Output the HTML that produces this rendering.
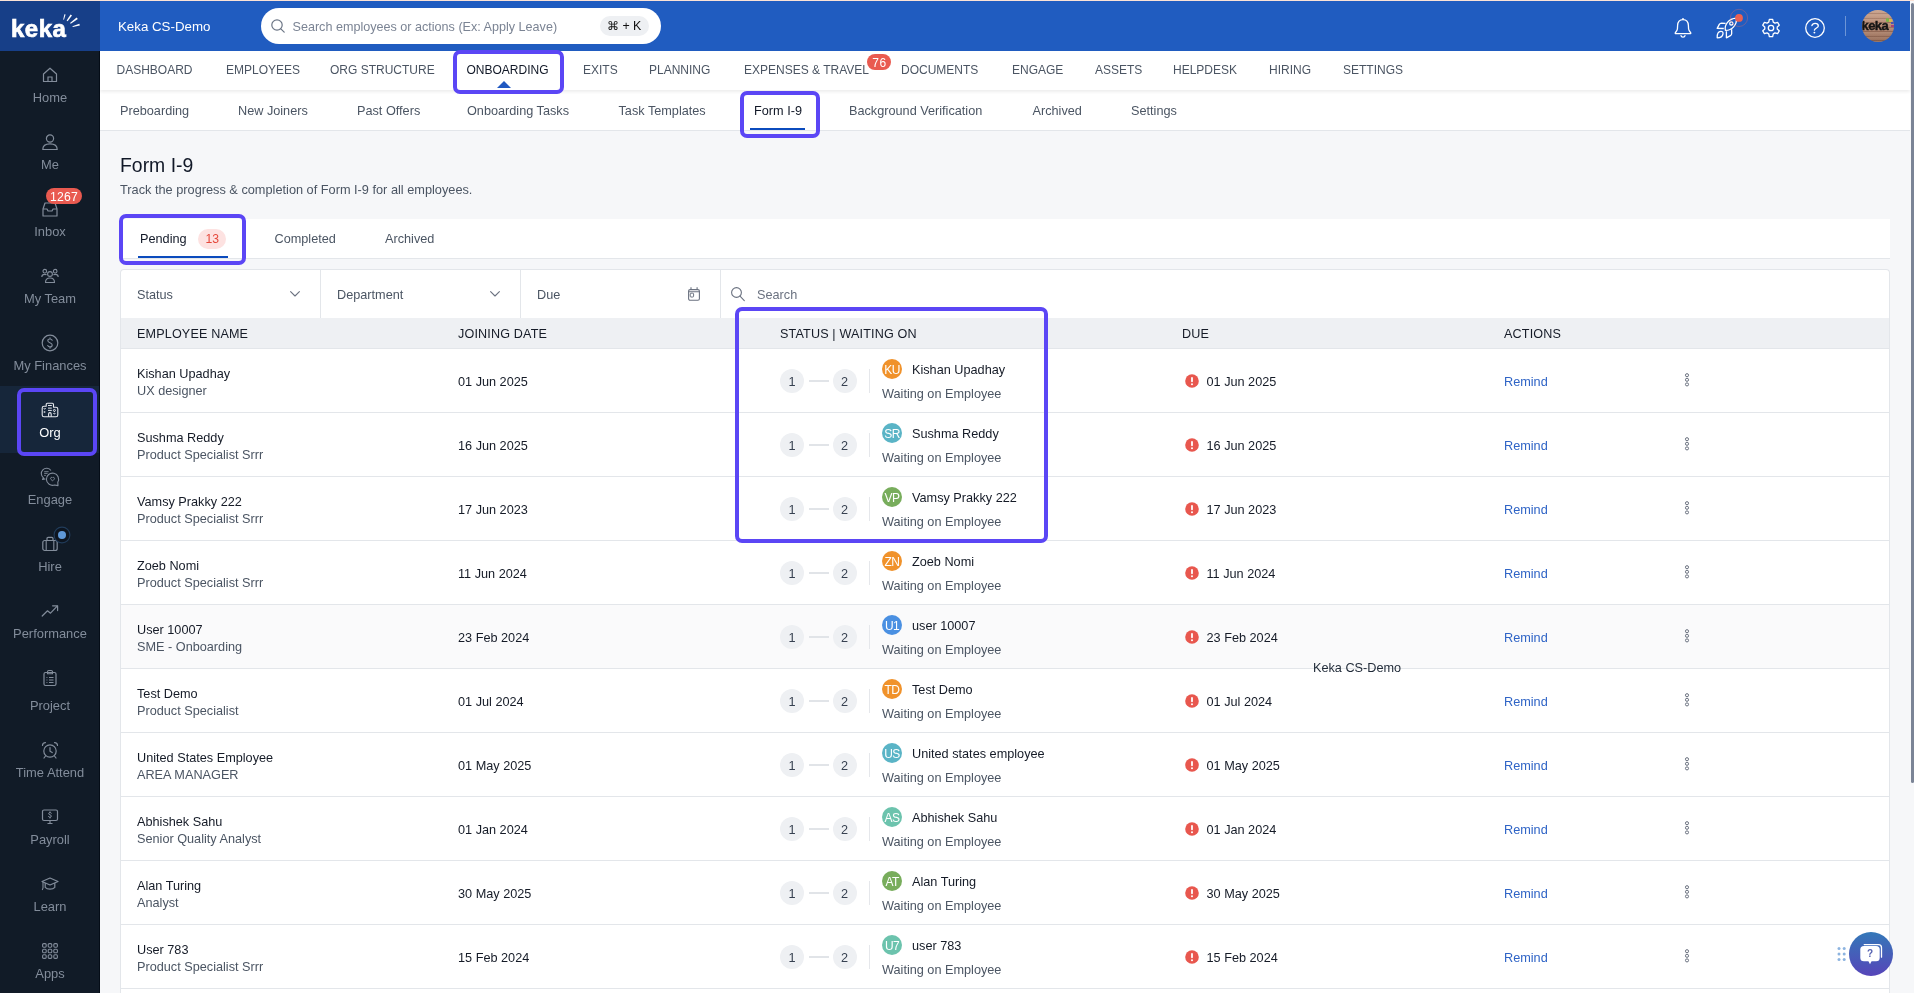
<!DOCTYPE html><html><head><meta charset="utf-8"><title>Form I-9</title><style>
*{box-sizing:border-box;margin:0;padding:0}
html,body{width:1914px;height:993px;overflow:hidden;background:#f6f7f9;font-family:"Liberation Sans",sans-serif}
.t{position:absolute;line-height:1;white-space:nowrap}
.a{position:absolute}
svg.a{overflow:visible}
</style></head><body><div style="position:absolute;left:0;top:0;width:1914px;height:993px;overflow:hidden;will-change:transform">
<div class="a" style="left:0px;top:0px;width:1914px;height:1px;background:#fbe2d6"></div>
<div class="a" style="left:0px;top:1px;width:1910px;height:50px;background:#205cc0"></div>
<div class="a" style="left:0px;top:1px;width:100px;height:50px;background:#173f88"></div>
<div class="t" style="left:11px;top:16.7px;font-size:24px;font-weight:700;color:#fff;letter-spacing:0.5px;-webkit-text-stroke:0.7px #fff">keka</div>
<svg class="a" style="left:5px;top:8px;" width="84" height="37" viewBox="5 8 84 37" fill="none"><g fill="#fff"><path d="M63.2 19.6 L64.4 14.3 L65.6 14.6 L64.0 19.8 Z"/><path d="M66.6 20.6 L70.6 14.6 L72.0 15.4 L67.6 21.2 Z"/><path d="M70.0 23.0 L76.6 17.6 L77.8 19.0 L70.8 23.8 Z"/><path d="M72.4 26.2 L79.4 23.8 L79.8 25.4 L72.8 27.0 Z"/></g></svg>
<div class="t" style="left:118px;top:20.04px;font-size:13.3px;color:#fff;">Keka CS-Demo</div>
<div class="a" style="left:261px;top:8px;width:400px;height:36px;background:#fff;border-radius:18px"></div>
<svg class="a" style="left:271px;top:19px;" width="14" height="14" viewBox="0 0 14 14" fill="none"><circle cx="6" cy="6" r="5.2" stroke="#6b7585" stroke-width="1.2"/><line x1="9.8" y1="9.8" x2="13.2" y2="13.2" stroke="#6b7585" stroke-width="1.2" stroke-linecap="round"/></svg>
<div class="t" style="left:292.5px;top:21.33px;font-size:12.6px;color:#7b8494;">Search employees or actions (Ex: Apply Leave)</div>
<div class="a" style="left:600px;top:16px;width:49px;height:20px;background:#eef0f3;border-radius:10px"></div>
<div class="t" style="left:607px;top:19.50px;font-size:12.4px;color:#111;">&#8984; + K</div>
<svg class="a" style="left:1668px;top:12px;" width="32" height="32" viewBox="0 0 32 32" fill="none"><circle cx="15" cy="6.9" r="0.9" fill="#fff"/><path d="M15 7.6 C11.4 7.6 9.7 10.4 9.6 13.6 L9.4 17 C9.2 18.6 8.4 19.4 7.5 20.4 C6.8 21.3 7.2 21.7 8.2 21.7 H21.8 C22.8 21.7 23.2 21.3 22.5 20.4 C21.6 19.4 20.8 18.6 20.6 17 L20.4 13.6 C20.3 10.4 18.6 7.6 15 7.6 Z" stroke="#fff" stroke-width="1.3" stroke-linejoin="round"/><path d="M13 23.6 C13.3 25.6 16.7 25.6 17 23.6" stroke="#fff" stroke-width="1.3" stroke-linecap="round"/></svg>
<svg class="a" style="left:1712px;top:8px;" width="40" height="34" viewBox="0 0 40 34" fill="none"><g stroke="#fff" stroke-width="1.3" stroke-linejoin="round" fill="none"><path d="M13.4 22.4 C12.2 17.5 16 10.6 24.4 10.2 C25.2 16.8 19.8 22.6 13.4 22.4 Z"/><circle cx="19.3" cy="15.4" r="1.6"/><path d="M13.6 15.3 L9.5 15.1 C8.5 15.1 7.8 15.6 7.3 16.4 L5.2 20.4 L11.8 20.5"/><path d="M19.6 21.2 L19.7 25.5 C19.7 26.5 19.2 27.2 18.4 27.7 L14.4 29.8 L14.4 23.3"/><path d="M5.2 29.8 C5 26 6.5 23.5 8.8 23.3 C10.3 23.2 11.2 24.3 11 25.8 C10.6 28.3 8 29.8 5.2 29.8 Z"/></g><circle cx="27" cy="9.9" r="8.6" stroke="rgba(235,110,100,0.35)" stroke-width="1" fill="none"/><circle cx="27" cy="9.9" r="3.9" fill="#ec6152"/></svg>
<svg class="a" style="left:1755px;top:12px;" width="32" height="32" viewBox="0 0 32 32" fill="none"><path d="M13.74 10.12 L14.34 7.46 L17.66 7.46 L18.26 10.12 L19.96 11.10 L22.57 10.29 L24.23 13.17 L22.22 15.01 L22.22 16.99 L24.23 18.83 L22.57 21.71 L19.96 20.90 L18.26 21.88 L17.66 24.54 L14.34 24.54 L13.74 21.88 L12.04 20.90 L9.43 21.71 L7.77 18.83 L9.78 16.99 L9.78 15.01 L7.77 13.17 L9.43 10.29 L12.04 11.10 Z" stroke="#fff" stroke-width="1.3" stroke-linejoin="round"/><circle cx="16" cy="16" r="2.7" stroke="#fff" stroke-width="1.3"/></svg>
<svg class="a" style="left:1805px;top:18px;" width="20" height="20" viewBox="0 0 20 20" fill="none"><circle cx="10" cy="10" r="9.3" stroke="#fff" stroke-width="1.3"/><path d="M6.9 7.7 C7.3 6.2 8.5 5.4 10.1 5.4 C11.9 5.4 13.3 6.5 13.3 8 C13.3 9.8 9.7 10.2 9.4 12.2" stroke="#fff" stroke-width="1.3" stroke-linecap="round" fill="none"/><circle cx="9.4" cy="14.6" r="0.95" fill="#fff"/></svg>
<div class="a" style="left:1845px;top:16px;width:1px;height:20px;background:rgba(255,255,255,0.35)"></div>
<div class="a" style="left:1862px;top:10px;width:32px;height:32px;border-radius:50%;background:repeating-linear-gradient(180deg,#bf9680 0px,#b88d77 3px,#8f6552 3.7px,#bb917b 4.5px);overflow:hidden"><div class="a" style="left:0;top:0;width:32px;height:32px;background:linear-gradient(180deg,rgba(255,230,210,0.25) 0%,rgba(0,0,0,0) 45%,rgba(70,35,20,0.28) 100%)"></div><div class="t" style="left:-0.5px;top:9.2px;font-size:13px;font-weight:700;color:#151515;letter-spacing:-0.6px;-webkit-text-stroke:0.4px #151515">keka</div><div class="a" style="left:24px;top:8px;width:2.5px;height:3.5px;background:#7fb34a;border-radius:1px"></div><div class="a" style="left:27px;top:9px;width:2.5px;height:3px;background:#d8b84a;border-radius:1px"></div><div class="a" style="left:28.5px;top:11.5px;width:3.5px;height:2px;background:#4a58b0"></div><div class="a" style="left:28.5px;top:14.5px;width:3.5px;height:2px;background:#a8407a"></div></div>
<div class="a" style="left:0px;top:51px;width:100px;height:942px;background:#111b27"></div>
<div class="a" style="left:0px;top:386px;width:100px;height:67px;background:#16263a"></div>
<svg class="a" style="left:41.0px;top:66.0px;" width="18" height="18" viewBox="0 0 18 18" fill="none"><path d="M2.5 8 L9 2.2 L15.5 8 V15.5 H2.5 Z" stroke="#838d9b" stroke-width="1.2" stroke-linejoin="round"/><path d="M7 15.5 V11 H11 V15.5" stroke="#838d9b" stroke-width="1.2"/></svg>
<div class="t" style="left:0;width:100px;text-align:center;top:92.08px;font-size:12.9px;color:#838d9b">Home</div>
<svg class="a" style="left:41.0px;top:133.0px;" width="18" height="18" viewBox="0 0 18 18" fill="none"><circle cx="9" cy="5.5" r="3.6" stroke="#838d9b" stroke-width="1.2"/><path d="M1.8 16.5 C1.8 12.2 5 10.8 9 10.8 C13 10.8 16.2 12.2 16.2 16.5 Z" stroke="#838d9b" stroke-width="1.2" stroke-linejoin="round"/></svg>
<div class="t" style="left:0;width:100px;text-align:center;top:159.08px;font-size:12.9px;color:#838d9b">Me</div>
<svg class="a" style="left:41.0px;top:200.0px;" width="18" height="18" viewBox="0 0 18 18" fill="none"><path d="M2 9 L4 3 H14 L16 9 V16 H2 Z" stroke="#838d9b" stroke-width="1.2" stroke-linejoin="round"/><path d="M2 9 H6 L7 11 H11 L12 9 H16" stroke="#838d9b" stroke-width="1.2" stroke-linejoin="round"/></svg>
<div class="t" style="left:0;width:100px;text-align:center;top:226.08px;font-size:12.9px;color:#838d9b">Inbox</div>
<svg class="a" style="left:41.0px;top:267.0px;" width="18" height="18" viewBox="0 0 18 18" fill="none"><circle cx="9" cy="7" r="2.4" stroke="#838d9b" stroke-width="1.1"/><path d="M4.5 15.5 C4.5 12 6.5 11 9 11 C11.5 11 13.5 12 13.5 15.5 Z" stroke="#838d9b" stroke-width="1.1" stroke-linejoin="round"/><circle cx="3.8" cy="4.2" r="1.8" stroke="#838d9b" stroke-width="1.1"/><circle cx="14.2" cy="4.2" r="1.8" stroke="#838d9b" stroke-width="1.1"/><path d="M0.8 10 C0.8 8 2 7.4 3.8 7.4 C4.6 7.4 5.2 7.6 5.6 7.9" stroke="#838d9b" stroke-width="1.1"/><path d="M17.2 10 C17.2 8 16 7.4 14.2 7.4 C13.4 7.4 12.8 7.6 12.4 7.9" stroke="#838d9b" stroke-width="1.1"/></svg>
<div class="t" style="left:0;width:100px;text-align:center;top:293.08px;font-size:12.9px;color:#838d9b">My Team</div>
<svg class="a" style="left:41.0px;top:334.0px;" width="18" height="18" viewBox="0 0 18 18" fill="none"><circle cx="9" cy="9" r="7.8" stroke="#838d9b" stroke-width="1.2"/><path d="M11.2 6.2 C10.8 5.4 10 5 9 5 C7.6 5 6.8 5.8 6.8 6.8 C6.8 9 11.2 8.4 11.2 10.9 C11.2 12 10.3 12.9 9 12.9 C7.9 12.9 7.1 12.4 6.7 11.6 M9 3.8 V5 M9 12.9 V14.2" stroke="#838d9b" stroke-width="1.1" stroke-linecap="round"/></svg>
<div class="t" style="left:0;width:100px;text-align:center;top:360.08px;font-size:12.9px;color:#838d9b">My Finances</div>
<svg class="a" style="left:41.0px;top:401.0px;" width="18" height="18" viewBox="0 0 18 18" fill="none"><path d="M5.2 5.3 V3.4 C5.2 2.7 5.7 2.2 6.4 2.2 H11.3 C12 2.2 12.5 2.7 12.5 3.4 V6.2 H15 C16 6.2 16.8 7 16.8 8 V14 C16.8 15 16 15.8 15 15.8 H3 C2 15.8 1.2 15 1.2 14 V7.1 C1.2 6.1 2 5.3 3 5.3 Z" stroke="#e6e9ee" stroke-width="1.1" stroke-linejoin="round"/><path d="M7.6 15.8 V13 C7.6 12.2 8.2 11.6 8.9 11.6 C9.6 11.6 10.2 12.2 10.2 13 V15.8" stroke="#e6e9ee" stroke-width="1.1"/><path d="M7 4.5 H10.8 M7 7.1 H10.8 M7 9.4 H10.8" stroke="#e6e9ee" stroke-width="1"/><path d="M2.8 7.2 C3 8.4 4.4 8.4 4.6 7.2" stroke="#e6e9ee" stroke-width="1"/><rect x="2.7" y="10.3" width="1.6" height="1.4" fill="#e6e9ee"/><circle cx="13.4" cy="9.4" r="1" stroke="#e6e9ee" stroke-width="0.9"/><path d="M13.4 10.4 V11.2 M12.4 12 C12.6 13.2 14.2 13.2 14.4 12" stroke="#e6e9ee" stroke-width="1"/></svg>
<div class="t" style="left:0;width:100px;text-align:center;top:427.08px;font-size:12.9px;color:#fff">Org</div>
<svg class="a" style="left:41.0px;top:468.0px;" width="18" height="18" viewBox="0 0 18 18" fill="none"><path d="M9.94 2.56 A5.3 5.3 0 1 0 2.56 9.94 L1.5 11.4 L4.3 10.9" stroke="#838d9b" stroke-width="1.1" stroke-linejoin="round"/><path d="M3.2 3.7 H7.6 M3.2 5.4 H6.6 M3.2 7.4 H4.8" stroke="#838d9b" stroke-width="0.9"/><path d="M13.59 16.93 A6.1 6.1 0 1 1 16.78 14.25 L17 17.6 Z" stroke="#838d9b" stroke-width="1.1" stroke-linejoin="round"/><path d="M11.5 12.9 L9.9 11.3 C9.3 10.7 9.5 9.6 10.3 9.4 C10.9 9.3 11.3 9.6 11.5 10 C11.7 9.6 12.1 9.3 12.7 9.4 C13.5 9.6 13.7 10.7 13.1 11.3 Z" stroke="#838d9b" stroke-width="0.9" stroke-linejoin="round"/></svg>
<div class="t" style="left:0;width:100px;text-align:center;top:494.08px;font-size:12.9px;color:#838d9b">Engage</div>
<svg class="a" style="left:41.0px;top:535.0px;" width="18" height="18" viewBox="0 0 18 18" fill="none"><rect x="1.8" y="5.5" width="14.4" height="10" rx="2" stroke="#838d9b" stroke-width="1.2"/><path d="M6 5.5 V3.6 C6 2.9 6.5 2.4 7.2 2.4 H10.8 C11.5 2.4 12 2.9 12 3.6 V5.5" stroke="#838d9b" stroke-width="1.2"/><path d="M5.2 5.5 V15.5 M12.8 5.5 V15.5" stroke="#838d9b" stroke-width="1.1"/></svg>
<div class="t" style="left:0;width:100px;text-align:center;top:561.08px;font-size:12.9px;color:#838d9b">Hire</div>
<svg class="a" style="left:41.0px;top:602.0px;" width="18" height="18" viewBox="0 0 18 18" fill="none"><path d="M1.2 14 L6.5 8.8 L9.5 11.2 L16.2 4.2" stroke="#838d9b" stroke-width="1.2" stroke-linecap="round" stroke-linejoin="round"/><path d="M11.6 3.8 H16.6 V8.6" stroke="#838d9b" stroke-width="1.2" stroke-linecap="round" stroke-linejoin="round"/></svg>
<div class="t" style="left:0;width:100px;text-align:center;top:628.08px;font-size:12.9px;color:#838d9b">Performance</div>
<svg class="a" style="left:41.0px;top:669.0px;" width="18" height="18" viewBox="0 0 18 18" fill="none"><rect x="3" y="3.5" width="12" height="13" rx="1.5" stroke="#838d9b" stroke-width="1.2"/><path d="M6.5 3.5 V2.8 C6.5 2 7 1.5 7.8 1.5 H10.2 C11 1.5 11.5 2 11.5 2.8 V4.8 H6.5 Z" stroke="#838d9b" stroke-width="1.1"/><path d="M5.5 8.5 H6.4 M8 8.5 H12.5 M5.5 11 H6.4 M8 11 H12.5 M5.5 13.5 H6.4 M8 13.5 H12.5" stroke="#838d9b" stroke-width="1.1"/></svg>
<div class="t" style="left:0;width:100px;text-align:center;top:700.08px;font-size:12.9px;color:#838d9b">Project</div>
<svg class="a" style="left:41.0px;top:741.0px;" width="18" height="18" viewBox="0 0 18 18" fill="none"><circle cx="9" cy="10" r="6.2" stroke="#838d9b" stroke-width="1.2"/><path d="M9 6.5 V10.2 L11.2 11.6" stroke="#838d9b" stroke-width="1.2" stroke-linecap="round"/><path d="M1.5 4.5 C1.5 2.8 2.8 1.6 4.5 1.6 M16.5 4.5 C16.5 2.8 15.2 1.6 13.5 1.6 M4.5 15 L3 17 M13.5 15 L15 17" stroke="#838d9b" stroke-width="1.2" stroke-linecap="round"/></svg>
<div class="t" style="left:0;width:100px;text-align:center;top:767.08px;font-size:12.9px;color:#838d9b">Time Attend</div>
<svg class="a" style="left:41.0px;top:808.0px;" width="18" height="18" viewBox="0 0 18 18" fill="none"><rect x="1.5" y="2" width="15" height="10.5" rx="1.5" stroke="#838d9b" stroke-width="1.2"/><path d="M6.5 15.5 H11.5 M9 12.5 V15.5" stroke="#838d9b" stroke-width="1.2"/><path d="M10.4 5.2 C10.1 4.8 9.6 4.6 9 4.6 C8.2 4.6 7.6 5 7.6 5.7 C7.6 7 10.4 6.6 10.4 8.1 C10.4 8.8 9.8 9.3 9 9.3 C8.3 9.3 7.8 9 7.5 8.5 M9 3.8 V4.6 M9 9.3 V10.1" stroke="#838d9b" stroke-width="1" stroke-linecap="round"/></svg>
<div class="t" style="left:0;width:100px;text-align:center;top:834.08px;font-size:12.9px;color:#838d9b">Payroll</div>
<svg class="a" style="left:41.0px;top:875.0px;" width="18" height="18" viewBox="0 0 18 18" fill="none"><path d="M9 3 L17 6.5 L9 10 L1 6.5 Z" stroke="#838d9b" stroke-width="1.2" stroke-linejoin="round"/><path d="M4.2 8 V12.3 C5.2 13.5 7 14.2 9 14.2 C11 14.2 12.8 13.5 13.8 12.3 V8" stroke="#838d9b" stroke-width="1.2"/><path d="M2 7 V13 L1.4 14.6" stroke="#838d9b" stroke-width="1.1" stroke-linecap="round"/></svg>
<div class="t" style="left:0;width:100px;text-align:center;top:901.08px;font-size:12.9px;color:#838d9b">Learn</div>
<svg class="a" style="left:41.0px;top:942.0px;" width="18" height="18" viewBox="0 0 18 18" fill="none"><rect x="1.6" y="1.6" width="3.6" height="3.6" rx="1.1" stroke="#838d9b" stroke-width="1.1"/><rect x="1.6" y="7.2" width="3.6" height="3.6" rx="1.1" stroke="#838d9b" stroke-width="1.1"/><rect x="1.6" y="12.8" width="3.6" height="3.6" rx="1.1" stroke="#838d9b" stroke-width="1.1"/><rect x="7.2" y="1.6" width="3.6" height="3.6" rx="1.1" stroke="#838d9b" stroke-width="1.1"/><rect x="7.2" y="7.2" width="3.6" height="3.6" rx="1.1" stroke="#838d9b" stroke-width="1.1"/><rect x="7.2" y="12.8" width="3.6" height="3.6" rx="1.1" stroke="#838d9b" stroke-width="1.1"/><rect x="12.8" y="1.6" width="3.6" height="3.6" rx="1.1" stroke="#838d9b" stroke-width="1.1"/><rect x="12.8" y="7.2" width="3.6" height="3.6" rx="1.1" stroke="#838d9b" stroke-width="1.1"/><rect x="12.8" y="12.8" width="3.6" height="3.6" rx="1.1" stroke="#838d9b" stroke-width="1.1"/></svg>
<div class="t" style="left:0;width:100px;text-align:center;top:968.08px;font-size:12.9px;color:#838d9b">Apps</div>
<div class="a" style="left:46px;top:188px;width:36px;height:16px;border-radius:8px;background:#e95a50"></div>
<div class="t" style="left:50px;top:190.67px;font-size:12.2px;color:#fff;letter-spacing:0.2px;">1267</div>
<svg class="a" style="left:54px;top:527px;" width="16" height="16" viewBox="0 0 16 16" fill="none"><circle cx="8" cy="8" r="7.9" fill="#0d1520" stroke="#213c5a" stroke-width="1.1"/><circle cx="8" cy="8" r="4" fill="#5e98d8"/></svg>
<div class="a" style="left:17px;top:388px;width:80px;height:68px;border:4px solid #5b46f5;border-radius:7px"></div>
<div class="a" style="left:100px;top:51px;width:1810px;height:39px;background:#fff;box-shadow:0 2px 3px rgba(0,0,0,0.07);z-index:2"></div>
<div class="a" style="left:100px;top:90px;width:1810px;height:41px;background:#fff;border-bottom:1px solid #e3e6ea"></div>
<div class="a" style="left:99px;top:51px;width:1px;height:942px;background:#050d17"></div>
<div class="t" style="left:116.5px;top:63.84px;font-size:12px;color:#4b5563;z-index:3;">DASHBOARD</div>
<div class="t" style="left:226px;top:63.84px;font-size:12px;color:#4b5563;z-index:3;">EMPLOYEES</div>
<div class="t" style="left:330px;top:63.84px;font-size:12px;color:#4b5563;z-index:3;">ORG STRUCTURE</div>
<div class="t" style="left:466.5px;top:63.84px;font-size:12px;color:#111827;z-index:3;">ONBOARDING</div>
<div class="t" style="left:583px;top:63.84px;font-size:12px;color:#4b5563;z-index:3;">EXITS</div>
<div class="t" style="left:649px;top:63.84px;font-size:12px;color:#4b5563;z-index:3;">PLANNING</div>
<div class="t" style="left:744px;top:63.84px;font-size:12px;color:#4b5563;z-index:3;">EXPENSES &amp; TRAVEL</div>
<div class="t" style="left:901px;top:63.84px;font-size:12px;color:#4b5563;z-index:3;">DOCUMENTS</div>
<div class="t" style="left:1012px;top:63.84px;font-size:12px;color:#4b5563;z-index:3;">ENGAGE</div>
<div class="t" style="left:1095px;top:63.84px;font-size:12px;color:#4b5563;z-index:3;">ASSETS</div>
<div class="t" style="left:1173px;top:63.84px;font-size:12px;color:#4b5563;z-index:3;">HELPDESK</div>
<div class="t" style="left:1269px;top:63.84px;font-size:12px;color:#4b5563;z-index:3;">HIRING</div>
<div class="t" style="left:1343px;top:63.84px;font-size:12px;color:#4b5563;z-index:3;">SETTINGS</div>
<svg class="a" style="left:497px;top:81px;z-index:3;" width="14" height="7" viewBox="0 0 14 7" fill="none"><path d="M0 7 L7 0 L14 7 Z" fill="#2059c1"/></svg>
<div class="a" style="left:867px;top:54px;width:24px;height:16px;background:#e95a50;border-radius:8px;z-index:3"></div>
<div class="t" style="left:872.2px;top:56.84px;font-size:12px;color:#fff;z-index:3;letter-spacing:0.6px;">76</div>
<div class="a" style="left:453px;top:50px;width:111px;height:44px;border:4px solid #5b46f5;border-radius:7px;z-index:4"></div>
<div class="t" style="left:120px;top:105.25px;font-size:12.7px;color:#4b5563;">Preboarding</div>
<div class="t" style="left:238px;top:105.25px;font-size:12.7px;color:#4b5563;">New Joiners</div>
<div class="t" style="left:357px;top:105.25px;font-size:12.7px;color:#4b5563;">Past Offers</div>
<div class="t" style="left:467px;top:105.25px;font-size:12.7px;color:#4b5563;">Onboarding Tasks</div>
<div class="t" style="left:618.5px;top:105.25px;font-size:12.7px;color:#4b5563;">Task Templates</div>
<div class="t" style="left:754px;top:105.25px;font-size:12.7px;color:#111827;">Form I-9</div>
<div class="t" style="left:849px;top:105.25px;font-size:12.7px;color:#4b5563;">Background Verification</div>
<div class="t" style="left:1032.5px;top:105.25px;font-size:12.7px;color:#4b5563;">Archived</div>
<div class="t" style="left:1131px;top:105.25px;font-size:12.7px;color:#4b5563;">Settings</div>
<div class="a" style="left:750px;top:128px;width:55px;height:2px;background:#0b4bbd"></div>
<div class="a" style="left:740px;top:91px;width:80px;height:47px;border:4px solid #5b46f5;border-radius:7px;z-index:4"></div>
<div class="t" style="left:120px;top:155.98px;font-size:19.4px;color:#111827;">Form I-9</div>
<div class="t" style="left:120px;top:183.51px;font-size:12.75px;color:#4b5563;">Track the progress &amp; completion of Form I-9 for all employees.</div>
<div class="a" style="left:120px;top:219px;width:1770px;height:40px;background:#fff;border-bottom:1px solid #e3e6ea"></div>
<div class="t" style="left:140px;top:232.65px;font-size:12.7px;color:#111827;">Pending</div>
<div class="a" style="left:198px;top:229px;width:28px;height:20px;background:#fde2e1;border-radius:10px"></div>
<div class="t" style="left:205.5px;top:233.07px;font-size:12.2px;color:#e5483b;">13</div>
<div class="a" style="left:138px;top:256px;width:90px;height:2px;background:#0b4bbd"></div>
<div class="t" style="left:274.5px;top:232.65px;font-size:12.7px;color:#4b5563;">Completed</div>
<div class="t" style="left:385px;top:232.65px;font-size:12.7px;color:#4b5563;">Archived</div>
<div class="a" style="left:119px;top:214px;width:127px;height:51px;border:4px solid #5b46f5;border-radius:7px;z-index:4"></div>
<div class="a" style="left:120px;top:269px;width:1770px;height:50px;background:#fff;border:1px solid #e3e6ea;border-bottom:none;border-radius:4px 4px 0 0"></div>
<div class="a" style="left:320px;top:270px;width:1px;height:48px;background:#e3e6ea"></div>
<div class="a" style="left:520px;top:270px;width:1px;height:48px;background:#e3e6ea"></div>
<div class="a" style="left:720px;top:270px;width:1px;height:48px;background:#e3e6ea"></div>
<div class="t" style="left:137px;top:289.45px;font-size:12.7px;color:#4b5563;">Status</div>
<div class="t" style="left:337px;top:289.45px;font-size:12.7px;color:#4b5563;">Department</div>
<div class="t" style="left:537px;top:289.45px;font-size:12.7px;color:#4b5563;">Due</div>
<div class="t" style="left:757px;top:289.45px;font-size:12.7px;color:#6b7280;">Search</div>
<svg class="a" style="left:290px;top:290.5px;" width="10" height="6" viewBox="0 0 10 6" fill="none"><path d="M0.6 0.6 L5 5 L9.4 0.6" stroke="#6b7280" stroke-width="1.1" stroke-linecap="round" stroke-linejoin="round"/></svg>
<svg class="a" style="left:490px;top:290.5px;" width="10" height="6" viewBox="0 0 10 6" fill="none"><path d="M0.6 0.6 L5 5 L9.4 0.6" stroke="#6b7280" stroke-width="1.1" stroke-linecap="round" stroke-linejoin="round"/></svg>
<svg class="a" style="left:688px;top:287px;" width="13" height="14" viewBox="0 0 13 14" fill="none"><rect x="0.6" y="2.6" width="10.8" height="10.7" rx="1.5" stroke="#6b7280" stroke-width="1.1"/><path d="M0.6 4.8 H11.4 M3 0.3 V2.4 M9.1 0.3 V2.4" stroke="#6b7280" stroke-width="1.1"/><rect x="2.2" y="6.2" width="3.4" height="3.8" rx="0.8" stroke="#6b7280" stroke-width="1"/></svg>
<svg class="a" style="left:731px;top:287px;" width="14" height="14" viewBox="0 0 14 14" fill="none"><circle cx="5.5" cy="5.5" r="4.9" stroke="#6b7280" stroke-width="1.1"/><line x1="9" y1="9.1" x2="13.3" y2="13.6" stroke="#6b7280" stroke-width="1.1" stroke-linecap="round"/></svg>
<div class="a" style="left:120px;top:318px;width:1770px;height:31px;background:#eef0f3;border-left:1px solid #e3e6ea;border-right:1px solid #e3e6ea;border-bottom:1px solid #e3e6ea"></div>
<div class="t" style="left:137px;top:328.23px;font-size:12.6px;color:#151b27;letter-spacing:0.15px;">EMPLOYEE NAME</div>
<div class="t" style="left:458px;top:328.23px;font-size:12.6px;color:#151b27;letter-spacing:0.15px;">JOINING DATE</div>
<div class="t" style="left:780px;top:328.23px;font-size:12.6px;color:#151b27;letter-spacing:0.15px;">STATUS | WAITING ON</div>
<div class="t" style="left:1182px;top:328.23px;font-size:12.6px;color:#151b27;letter-spacing:0.15px;">DUE</div>
<div class="t" style="left:1504px;top:328.23px;font-size:12.6px;color:#151b27;letter-spacing:0.15px;">ACTIONS</div>
<div class="a" style="left:120px;top:349px;width:1770px;height:64px;background:#fff;border-left:1px solid #e3e6ea;border-right:1px solid #e3e6ea;border-bottom:1px solid #e3e6ea"></div>
<div class="t" style="left:137px;top:367.55px;font-size:12.7px;color:#151b27;">Kishan Upadhay</div>
<div class="t" style="left:137px;top:385.15px;font-size:12.7px;color:#4b5563;">UX designer</div>
<div class="t" style="left:458px;top:375.65px;font-size:12.7px;color:#151b27;">01 Jun 2025</div>
<div class="a" style="left:780px;top:369px;width:24px;height:24px;background:#eef0f3;border-radius:50%"></div>
<div class="a" style="left:833px;top:369px;width:24px;height:24px;background:#eef0f3;border-radius:50%"></div>
<div class="a" style="left:809px;top:380px;width:20px;height:1.5px;background:#e1e4e8"></div>
<div class="t" style="left:788.5px;top:375.65px;font-size:12.7px;color:#374151;">1</div>
<div class="t" style="left:841px;top:375.65px;font-size:12.7px;color:#374151;">2</div>
<div class="a" style="left:869px;top:369px;width:1px;height:24px;background:#e5e7eb"></div>
<div class="a" style="left:882px;top:359px;width:20px;height:20px;border-radius:50%;background:#f0922b"></div>
<div class="t" style="left:882px;width:20px;text-align:center;top:363.64px;font-size:12px;color:#fff;letter-spacing:-0.6px">KU</div>
<div class="t" style="left:912px;top:363.55px;font-size:12.7px;color:#151b27;">Kishan Upadhay</div>
<div class="t" style="left:882px;top:388.05px;font-size:12.7px;color:#4b5563;">Waiting on Employee</div>
<svg class="a" style="left:1185px;top:374px;" width="14" height="14" viewBox="0 0 14 14" fill="none"><circle cx="7" cy="7" r="6.8" fill="#e8574e"/><rect x="6.1" y="3" width="1.8" height="5.2" rx="0.9" fill="#fff"/><circle cx="7" cy="10.3" r="1" fill="#fff"/></svg>
<div class="t" style="left:1206.5px;top:376.45px;font-size:12.7px;color:#151b27;">01 Jun 2025</div>
<div class="t" style="left:1504px;top:376.45px;font-size:12.7px;color:#2f64c6;">Remind</div>
<svg class="a" style="left:1684px;top:373px;" width="6" height="14" viewBox="0 0 6 14" fill="none"><circle cx="3" cy="2.2" r="1.55" stroke="#6b7280" stroke-width="1"/><circle cx="3" cy="6.8" r="1.55" stroke="#6b7280" stroke-width="1"/><circle cx="3" cy="11.4" r="1.55" stroke="#6b7280" stroke-width="1"/></svg>
<div class="a" style="left:120px;top:413px;width:1770px;height:64px;background:#fff;border-left:1px solid #e3e6ea;border-right:1px solid #e3e6ea;border-bottom:1px solid #e3e6ea"></div>
<div class="t" style="left:137px;top:431.55px;font-size:12.7px;color:#151b27;">Sushma Reddy</div>
<div class="t" style="left:137px;top:449.15px;font-size:12.7px;color:#4b5563;">Product Specialist Srrr</div>
<div class="t" style="left:458px;top:439.65px;font-size:12.7px;color:#151b27;">16 Jun 2025</div>
<div class="a" style="left:780px;top:433px;width:24px;height:24px;background:#eef0f3;border-radius:50%"></div>
<div class="a" style="left:833px;top:433px;width:24px;height:24px;background:#eef0f3;border-radius:50%"></div>
<div class="a" style="left:809px;top:444px;width:20px;height:1.5px;background:#e1e4e8"></div>
<div class="t" style="left:788.5px;top:439.65px;font-size:12.7px;color:#374151;">1</div>
<div class="t" style="left:841px;top:439.65px;font-size:12.7px;color:#374151;">2</div>
<div class="a" style="left:869px;top:433px;width:1px;height:24px;background:#e5e7eb"></div>
<div class="a" style="left:882px;top:423px;width:20px;height:20px;border-radius:50%;background:#5ab4c6"></div>
<div class="t" style="left:882px;width:20px;text-align:center;top:427.64px;font-size:12px;color:#fff;letter-spacing:-0.6px">SR</div>
<div class="t" style="left:912px;top:427.55px;font-size:12.7px;color:#151b27;">Sushma Reddy</div>
<div class="t" style="left:882px;top:452.05px;font-size:12.7px;color:#4b5563;">Waiting on Employee</div>
<svg class="a" style="left:1185px;top:438px;" width="14" height="14" viewBox="0 0 14 14" fill="none"><circle cx="7" cy="7" r="6.8" fill="#e8574e"/><rect x="6.1" y="3" width="1.8" height="5.2" rx="0.9" fill="#fff"/><circle cx="7" cy="10.3" r="1" fill="#fff"/></svg>
<div class="t" style="left:1206.5px;top:440.45px;font-size:12.7px;color:#151b27;">16 Jun 2025</div>
<div class="t" style="left:1504px;top:440.45px;font-size:12.7px;color:#2f64c6;">Remind</div>
<svg class="a" style="left:1684px;top:437px;" width="6" height="14" viewBox="0 0 6 14" fill="none"><circle cx="3" cy="2.2" r="1.55" stroke="#6b7280" stroke-width="1"/><circle cx="3" cy="6.8" r="1.55" stroke="#6b7280" stroke-width="1"/><circle cx="3" cy="11.4" r="1.55" stroke="#6b7280" stroke-width="1"/></svg>
<div class="a" style="left:120px;top:477px;width:1770px;height:64px;background:#fff;border-left:1px solid #e3e6ea;border-right:1px solid #e3e6ea;border-bottom:1px solid #e3e6ea"></div>
<div class="t" style="left:137px;top:495.55px;font-size:12.7px;color:#151b27;">Vamsy Prakky 222</div>
<div class="t" style="left:137px;top:513.15px;font-size:12.7px;color:#4b5563;">Product Specialist Srrr</div>
<div class="t" style="left:458px;top:503.65px;font-size:12.7px;color:#151b27;">17 Jun 2023</div>
<div class="a" style="left:780px;top:497px;width:24px;height:24px;background:#eef0f3;border-radius:50%"></div>
<div class="a" style="left:833px;top:497px;width:24px;height:24px;background:#eef0f3;border-radius:50%"></div>
<div class="a" style="left:809px;top:508px;width:20px;height:1.5px;background:#e1e4e8"></div>
<div class="t" style="left:788.5px;top:503.65px;font-size:12.7px;color:#374151;">1</div>
<div class="t" style="left:841px;top:503.65px;font-size:12.7px;color:#374151;">2</div>
<div class="a" style="left:869px;top:497px;width:1px;height:24px;background:#e5e7eb"></div>
<div class="a" style="left:882px;top:487px;width:20px;height:20px;border-radius:50%;background:#78ad5c"></div>
<div class="t" style="left:882px;width:20px;text-align:center;top:491.64px;font-size:12px;color:#fff;letter-spacing:-0.6px">VP</div>
<div class="t" style="left:912px;top:491.55px;font-size:12.7px;color:#151b27;">Vamsy Prakky 222</div>
<div class="t" style="left:882px;top:516.05px;font-size:12.7px;color:#4b5563;">Waiting on Employee</div>
<svg class="a" style="left:1185px;top:502px;" width="14" height="14" viewBox="0 0 14 14" fill="none"><circle cx="7" cy="7" r="6.8" fill="#e8574e"/><rect x="6.1" y="3" width="1.8" height="5.2" rx="0.9" fill="#fff"/><circle cx="7" cy="10.3" r="1" fill="#fff"/></svg>
<div class="t" style="left:1206.5px;top:504.45px;font-size:12.7px;color:#151b27;">17 Jun 2023</div>
<div class="t" style="left:1504px;top:504.45px;font-size:12.7px;color:#2f64c6;">Remind</div>
<svg class="a" style="left:1684px;top:501px;" width="6" height="14" viewBox="0 0 6 14" fill="none"><circle cx="3" cy="2.2" r="1.55" stroke="#6b7280" stroke-width="1"/><circle cx="3" cy="6.8" r="1.55" stroke="#6b7280" stroke-width="1"/><circle cx="3" cy="11.4" r="1.55" stroke="#6b7280" stroke-width="1"/></svg>
<div class="a" style="left:120px;top:541px;width:1770px;height:64px;background:#fff;border-left:1px solid #e3e6ea;border-right:1px solid #e3e6ea;border-bottom:1px solid #e3e6ea"></div>
<div class="t" style="left:137px;top:559.55px;font-size:12.7px;color:#151b27;">Zoeb Nomi</div>
<div class="t" style="left:137px;top:577.15px;font-size:12.7px;color:#4b5563;">Product Specialist Srrr</div>
<div class="t" style="left:458px;top:567.65px;font-size:12.7px;color:#151b27;">11 Jun 2024</div>
<div class="a" style="left:780px;top:561px;width:24px;height:24px;background:#eef0f3;border-radius:50%"></div>
<div class="a" style="left:833px;top:561px;width:24px;height:24px;background:#eef0f3;border-radius:50%"></div>
<div class="a" style="left:809px;top:572px;width:20px;height:1.5px;background:#e1e4e8"></div>
<div class="t" style="left:788.5px;top:567.65px;font-size:12.7px;color:#374151;">1</div>
<div class="t" style="left:841px;top:567.65px;font-size:12.7px;color:#374151;">2</div>
<div class="a" style="left:869px;top:561px;width:1px;height:24px;background:#e5e7eb"></div>
<div class="a" style="left:882px;top:551px;width:20px;height:20px;border-radius:50%;background:#f0922b"></div>
<div class="t" style="left:882px;width:20px;text-align:center;top:555.64px;font-size:12px;color:#fff;letter-spacing:-0.6px">ZN</div>
<div class="t" style="left:912px;top:555.55px;font-size:12.7px;color:#151b27;">Zoeb Nomi</div>
<div class="t" style="left:882px;top:580.05px;font-size:12.7px;color:#4b5563;">Waiting on Employee</div>
<svg class="a" style="left:1185px;top:566px;" width="14" height="14" viewBox="0 0 14 14" fill="none"><circle cx="7" cy="7" r="6.8" fill="#e8574e"/><rect x="6.1" y="3" width="1.8" height="5.2" rx="0.9" fill="#fff"/><circle cx="7" cy="10.3" r="1" fill="#fff"/></svg>
<div class="t" style="left:1206.5px;top:568.45px;font-size:12.7px;color:#151b27;">11 Jun 2024</div>
<div class="t" style="left:1504px;top:568.45px;font-size:12.7px;color:#2f64c6;">Remind</div>
<svg class="a" style="left:1684px;top:565px;" width="6" height="14" viewBox="0 0 6 14" fill="none"><circle cx="3" cy="2.2" r="1.55" stroke="#6b7280" stroke-width="1"/><circle cx="3" cy="6.8" r="1.55" stroke="#6b7280" stroke-width="1"/><circle cx="3" cy="11.4" r="1.55" stroke="#6b7280" stroke-width="1"/></svg>
<div class="a" style="left:120px;top:605px;width:1770px;height:64px;background:#fafafb;border-left:1px solid #e3e6ea;border-right:1px solid #e3e6ea;border-bottom:1px solid #e3e6ea"></div>
<div class="t" style="left:137px;top:623.55px;font-size:12.7px;color:#151b27;">User 10007</div>
<div class="t" style="left:137px;top:641.15px;font-size:12.7px;color:#4b5563;">SME - Onboarding</div>
<div class="t" style="left:458px;top:631.65px;font-size:12.7px;color:#151b27;">23 Feb 2024</div>
<div class="a" style="left:780px;top:625px;width:24px;height:24px;background:#eef0f3;border-radius:50%"></div>
<div class="a" style="left:833px;top:625px;width:24px;height:24px;background:#eef0f3;border-radius:50%"></div>
<div class="a" style="left:809px;top:636px;width:20px;height:1.5px;background:#e1e4e8"></div>
<div class="t" style="left:788.5px;top:631.65px;font-size:12.7px;color:#374151;">1</div>
<div class="t" style="left:841px;top:631.65px;font-size:12.7px;color:#374151;">2</div>
<div class="a" style="left:869px;top:625px;width:1px;height:24px;background:#e5e7eb"></div>
<div class="a" style="left:882px;top:615px;width:20px;height:20px;border-radius:50%;background:#4a90e2"></div>
<div class="t" style="left:882px;width:20px;text-align:center;top:619.64px;font-size:12px;color:#fff;letter-spacing:-0.6px">U1</div>
<div class="t" style="left:912px;top:619.55px;font-size:12.7px;color:#151b27;">user 10007</div>
<div class="t" style="left:882px;top:644.05px;font-size:12.7px;color:#4b5563;">Waiting on Employee</div>
<svg class="a" style="left:1185px;top:630px;" width="14" height="14" viewBox="0 0 14 14" fill="none"><circle cx="7" cy="7" r="6.8" fill="#e8574e"/><rect x="6.1" y="3" width="1.8" height="5.2" rx="0.9" fill="#fff"/><circle cx="7" cy="10.3" r="1" fill="#fff"/></svg>
<div class="t" style="left:1206.5px;top:632.45px;font-size:12.7px;color:#151b27;">23 Feb 2024</div>
<div class="t" style="left:1504px;top:632.45px;font-size:12.7px;color:#2f64c6;">Remind</div>
<svg class="a" style="left:1684px;top:629px;" width="6" height="14" viewBox="0 0 6 14" fill="none"><circle cx="3" cy="2.2" r="1.55" stroke="#6b7280" stroke-width="1"/><circle cx="3" cy="6.8" r="1.55" stroke="#6b7280" stroke-width="1"/><circle cx="3" cy="11.4" r="1.55" stroke="#6b7280" stroke-width="1"/></svg>
<div class="a" style="left:120px;top:669px;width:1770px;height:64px;background:#fff;border-left:1px solid #e3e6ea;border-right:1px solid #e3e6ea;border-bottom:1px solid #e3e6ea"></div>
<div class="t" style="left:137px;top:687.55px;font-size:12.7px;color:#151b27;">Test Demo</div>
<div class="t" style="left:137px;top:705.15px;font-size:12.7px;color:#4b5563;">Product Specialist</div>
<div class="t" style="left:458px;top:695.65px;font-size:12.7px;color:#151b27;">01 Jul 2024</div>
<div class="a" style="left:780px;top:689px;width:24px;height:24px;background:#eef0f3;border-radius:50%"></div>
<div class="a" style="left:833px;top:689px;width:24px;height:24px;background:#eef0f3;border-radius:50%"></div>
<div class="a" style="left:809px;top:700px;width:20px;height:1.5px;background:#e1e4e8"></div>
<div class="t" style="left:788.5px;top:695.65px;font-size:12.7px;color:#374151;">1</div>
<div class="t" style="left:841px;top:695.65px;font-size:12.7px;color:#374151;">2</div>
<div class="a" style="left:869px;top:689px;width:1px;height:24px;background:#e5e7eb"></div>
<div class="a" style="left:882px;top:679px;width:20px;height:20px;border-radius:50%;background:#f0922b"></div>
<div class="t" style="left:882px;width:20px;text-align:center;top:683.64px;font-size:12px;color:#fff;letter-spacing:-0.6px">TD</div>
<div class="t" style="left:912px;top:683.55px;font-size:12.7px;color:#151b27;">Test Demo</div>
<div class="t" style="left:882px;top:708.05px;font-size:12.7px;color:#4b5563;">Waiting on Employee</div>
<svg class="a" style="left:1185px;top:694px;" width="14" height="14" viewBox="0 0 14 14" fill="none"><circle cx="7" cy="7" r="6.8" fill="#e8574e"/><rect x="6.1" y="3" width="1.8" height="5.2" rx="0.9" fill="#fff"/><circle cx="7" cy="10.3" r="1" fill="#fff"/></svg>
<div class="t" style="left:1206.5px;top:696.45px;font-size:12.7px;color:#151b27;">01 Jul 2024</div>
<div class="t" style="left:1504px;top:696.45px;font-size:12.7px;color:#2f64c6;">Remind</div>
<svg class="a" style="left:1684px;top:693px;" width="6" height="14" viewBox="0 0 6 14" fill="none"><circle cx="3" cy="2.2" r="1.55" stroke="#6b7280" stroke-width="1"/><circle cx="3" cy="6.8" r="1.55" stroke="#6b7280" stroke-width="1"/><circle cx="3" cy="11.4" r="1.55" stroke="#6b7280" stroke-width="1"/></svg>
<div class="a" style="left:120px;top:733px;width:1770px;height:64px;background:#fff;border-left:1px solid #e3e6ea;border-right:1px solid #e3e6ea;border-bottom:1px solid #e3e6ea"></div>
<div class="t" style="left:137px;top:751.55px;font-size:12.7px;color:#151b27;">United States Employee</div>
<div class="t" style="left:137px;top:769.15px;font-size:12.7px;color:#4b5563;">AREA MANAGER</div>
<div class="t" style="left:458px;top:759.65px;font-size:12.7px;color:#151b27;">01 May 2025</div>
<div class="a" style="left:780px;top:753px;width:24px;height:24px;background:#eef0f3;border-radius:50%"></div>
<div class="a" style="left:833px;top:753px;width:24px;height:24px;background:#eef0f3;border-radius:50%"></div>
<div class="a" style="left:809px;top:764px;width:20px;height:1.5px;background:#e1e4e8"></div>
<div class="t" style="left:788.5px;top:759.65px;font-size:12.7px;color:#374151;">1</div>
<div class="t" style="left:841px;top:759.65px;font-size:12.7px;color:#374151;">2</div>
<div class="a" style="left:869px;top:753px;width:1px;height:24px;background:#e5e7eb"></div>
<div class="a" style="left:882px;top:743px;width:20px;height:20px;border-radius:50%;background:#5ab4c6"></div>
<div class="t" style="left:882px;width:20px;text-align:center;top:747.64px;font-size:12px;color:#fff;letter-spacing:-0.6px">US</div>
<div class="t" style="left:912px;top:747.55px;font-size:12.7px;color:#151b27;">United states employee</div>
<div class="t" style="left:882px;top:772.05px;font-size:12.7px;color:#4b5563;">Waiting on Employee</div>
<svg class="a" style="left:1185px;top:758px;" width="14" height="14" viewBox="0 0 14 14" fill="none"><circle cx="7" cy="7" r="6.8" fill="#e8574e"/><rect x="6.1" y="3" width="1.8" height="5.2" rx="0.9" fill="#fff"/><circle cx="7" cy="10.3" r="1" fill="#fff"/></svg>
<div class="t" style="left:1206.5px;top:760.45px;font-size:12.7px;color:#151b27;">01 May 2025</div>
<div class="t" style="left:1504px;top:760.45px;font-size:12.7px;color:#2f64c6;">Remind</div>
<svg class="a" style="left:1684px;top:757px;" width="6" height="14" viewBox="0 0 6 14" fill="none"><circle cx="3" cy="2.2" r="1.55" stroke="#6b7280" stroke-width="1"/><circle cx="3" cy="6.8" r="1.55" stroke="#6b7280" stroke-width="1"/><circle cx="3" cy="11.4" r="1.55" stroke="#6b7280" stroke-width="1"/></svg>
<div class="a" style="left:120px;top:797px;width:1770px;height:64px;background:#fff;border-left:1px solid #e3e6ea;border-right:1px solid #e3e6ea;border-bottom:1px solid #e3e6ea"></div>
<div class="t" style="left:137px;top:815.55px;font-size:12.7px;color:#151b27;">Abhishek Sahu</div>
<div class="t" style="left:137px;top:833.15px;font-size:12.7px;color:#4b5563;">Senior Quality Analyst</div>
<div class="t" style="left:458px;top:823.65px;font-size:12.7px;color:#151b27;">01 Jan 2024</div>
<div class="a" style="left:780px;top:817px;width:24px;height:24px;background:#eef0f3;border-radius:50%"></div>
<div class="a" style="left:833px;top:817px;width:24px;height:24px;background:#eef0f3;border-radius:50%"></div>
<div class="a" style="left:809px;top:828px;width:20px;height:1.5px;background:#e1e4e8"></div>
<div class="t" style="left:788.5px;top:823.65px;font-size:12.7px;color:#374151;">1</div>
<div class="t" style="left:841px;top:823.65px;font-size:12.7px;color:#374151;">2</div>
<div class="a" style="left:869px;top:817px;width:1px;height:24px;background:#e5e7eb"></div>
<div class="a" style="left:882px;top:807px;width:20px;height:20px;border-radius:50%;background:#6cc3ad"></div>
<div class="t" style="left:882px;width:20px;text-align:center;top:811.64px;font-size:12px;color:#fff;letter-spacing:-0.6px">AS</div>
<div class="t" style="left:912px;top:811.55px;font-size:12.7px;color:#151b27;">Abhishek Sahu</div>
<div class="t" style="left:882px;top:836.05px;font-size:12.7px;color:#4b5563;">Waiting on Employee</div>
<svg class="a" style="left:1185px;top:822px;" width="14" height="14" viewBox="0 0 14 14" fill="none"><circle cx="7" cy="7" r="6.8" fill="#e8574e"/><rect x="6.1" y="3" width="1.8" height="5.2" rx="0.9" fill="#fff"/><circle cx="7" cy="10.3" r="1" fill="#fff"/></svg>
<div class="t" style="left:1206.5px;top:824.45px;font-size:12.7px;color:#151b27;">01 Jan 2024</div>
<div class="t" style="left:1504px;top:824.45px;font-size:12.7px;color:#2f64c6;">Remind</div>
<svg class="a" style="left:1684px;top:821px;" width="6" height="14" viewBox="0 0 6 14" fill="none"><circle cx="3" cy="2.2" r="1.55" stroke="#6b7280" stroke-width="1"/><circle cx="3" cy="6.8" r="1.55" stroke="#6b7280" stroke-width="1"/><circle cx="3" cy="11.4" r="1.55" stroke="#6b7280" stroke-width="1"/></svg>
<div class="a" style="left:120px;top:861px;width:1770px;height:64px;background:#fff;border-left:1px solid #e3e6ea;border-right:1px solid #e3e6ea;border-bottom:1px solid #e3e6ea"></div>
<div class="t" style="left:137px;top:879.55px;font-size:12.7px;color:#151b27;">Alan Turing</div>
<div class="t" style="left:137px;top:897.15px;font-size:12.7px;color:#4b5563;">Analyst</div>
<div class="t" style="left:458px;top:887.65px;font-size:12.7px;color:#151b27;">30 May 2025</div>
<div class="a" style="left:780px;top:881px;width:24px;height:24px;background:#eef0f3;border-radius:50%"></div>
<div class="a" style="left:833px;top:881px;width:24px;height:24px;background:#eef0f3;border-radius:50%"></div>
<div class="a" style="left:809px;top:892px;width:20px;height:1.5px;background:#e1e4e8"></div>
<div class="t" style="left:788.5px;top:887.65px;font-size:12.7px;color:#374151;">1</div>
<div class="t" style="left:841px;top:887.65px;font-size:12.7px;color:#374151;">2</div>
<div class="a" style="left:869px;top:881px;width:1px;height:24px;background:#e5e7eb"></div>
<div class="a" style="left:882px;top:871px;width:20px;height:20px;border-radius:50%;background:#78ad5c"></div>
<div class="t" style="left:882px;width:20px;text-align:center;top:875.64px;font-size:12px;color:#fff;letter-spacing:-0.6px">AT</div>
<div class="t" style="left:912px;top:875.55px;font-size:12.7px;color:#151b27;">Alan Turing</div>
<div class="t" style="left:882px;top:900.05px;font-size:12.7px;color:#4b5563;">Waiting on Employee</div>
<svg class="a" style="left:1185px;top:886px;" width="14" height="14" viewBox="0 0 14 14" fill="none"><circle cx="7" cy="7" r="6.8" fill="#e8574e"/><rect x="6.1" y="3" width="1.8" height="5.2" rx="0.9" fill="#fff"/><circle cx="7" cy="10.3" r="1" fill="#fff"/></svg>
<div class="t" style="left:1206.5px;top:888.45px;font-size:12.7px;color:#151b27;">30 May 2025</div>
<div class="t" style="left:1504px;top:888.45px;font-size:12.7px;color:#2f64c6;">Remind</div>
<svg class="a" style="left:1684px;top:885px;" width="6" height="14" viewBox="0 0 6 14" fill="none"><circle cx="3" cy="2.2" r="1.55" stroke="#6b7280" stroke-width="1"/><circle cx="3" cy="6.8" r="1.55" stroke="#6b7280" stroke-width="1"/><circle cx="3" cy="11.4" r="1.55" stroke="#6b7280" stroke-width="1"/></svg>
<div class="a" style="left:120px;top:925px;width:1770px;height:64px;background:#fff;border-left:1px solid #e3e6ea;border-right:1px solid #e3e6ea;border-bottom:1px solid #e3e6ea"></div>
<div class="t" style="left:137px;top:943.55px;font-size:12.7px;color:#151b27;">User 783</div>
<div class="t" style="left:137px;top:961.15px;font-size:12.7px;color:#4b5563;">Product Specialist Srrr</div>
<div class="t" style="left:458px;top:951.65px;font-size:12.7px;color:#151b27;">15 Feb 2024</div>
<div class="a" style="left:780px;top:945px;width:24px;height:24px;background:#eef0f3;border-radius:50%"></div>
<div class="a" style="left:833px;top:945px;width:24px;height:24px;background:#eef0f3;border-radius:50%"></div>
<div class="a" style="left:809px;top:956px;width:20px;height:1.5px;background:#e1e4e8"></div>
<div class="t" style="left:788.5px;top:951.65px;font-size:12.7px;color:#374151;">1</div>
<div class="t" style="left:841px;top:951.65px;font-size:12.7px;color:#374151;">2</div>
<div class="a" style="left:869px;top:945px;width:1px;height:24px;background:#e5e7eb"></div>
<div class="a" style="left:882px;top:935px;width:20px;height:20px;border-radius:50%;background:#6cc3ad"></div>
<div class="t" style="left:882px;width:20px;text-align:center;top:939.64px;font-size:12px;color:#fff;letter-spacing:-0.6px">U7</div>
<div class="t" style="left:912px;top:939.55px;font-size:12.7px;color:#151b27;">user 783</div>
<div class="t" style="left:882px;top:964.05px;font-size:12.7px;color:#4b5563;">Waiting on Employee</div>
<svg class="a" style="left:1185px;top:950px;" width="14" height="14" viewBox="0 0 14 14" fill="none"><circle cx="7" cy="7" r="6.8" fill="#e8574e"/><rect x="6.1" y="3" width="1.8" height="5.2" rx="0.9" fill="#fff"/><circle cx="7" cy="10.3" r="1" fill="#fff"/></svg>
<div class="t" style="left:1206.5px;top:952.45px;font-size:12.7px;color:#151b27;">15 Feb 2024</div>
<div class="t" style="left:1504px;top:952.45px;font-size:12.7px;color:#2f64c6;">Remind</div>
<svg class="a" style="left:1684px;top:949px;" width="6" height="14" viewBox="0 0 6 14" fill="none"><circle cx="3" cy="2.2" r="1.55" stroke="#6b7280" stroke-width="1"/><circle cx="3" cy="6.8" r="1.55" stroke="#6b7280" stroke-width="1"/><circle cx="3" cy="11.4" r="1.55" stroke="#6b7280" stroke-width="1"/></svg>
<div class="a" style="left:120px;top:989px;width:1770px;height:64px;background:#fff;border-left:1px solid #e3e6ea;border-right:1px solid #e3e6ea;border-bottom:1px solid #e3e6ea"></div>
<div class="a" style="left:735px;top:307px;width:313px;height:236px;border:4px solid #5b46f5;border-radius:7px;z-index:4"></div>
<div class="t" style="left:1313px;top:662.15px;font-size:12.7px;color:#1f2937;z-index:5;">Keka CS-Demo</div>
<div class="a" style="left:1849px;top:932px;width:44px;height:44px;border-radius:50%;background:linear-gradient(180deg,#3478b8,#5645b9);z-index:5"></div>
<svg class="a" style="left:1858px;top:942px;z-index:6;" width="26" height="26" viewBox="0 0 26 26" fill="none"><path d="M6.2 2.6 H20.4 C22.4 2.6 23.5 3.7 23.5 5.7 V15.2" stroke="#fff" stroke-width="1.3" fill="none" stroke-linecap="round"/><rect x="2.3" y="4" width="19.4" height="15.3" rx="3.6" fill="#fff"/><path d="M10.4 19 L12 22.2 L13.6 19 Z" fill="#fff"/></svg>
<div class="t" style="left:1858px;width:24px;text-align:center;top:949.3px;font-size:10px;font-weight:700;color:#5662b2;z-index:7">?</div>
<svg class="a" style="left:1837px;top:946px;" width="10" height="16" viewBox="0 0 10 16" fill="none"><circle cx="2.0" cy="2.5" r="1.5" fill="#8db4e0"/><circle cx="2.0" cy="8.0" r="1.5" fill="#8db4e0"/><circle cx="2.0" cy="13.5" r="1.5" fill="#8db4e0"/><circle cx="7.2" cy="2.5" r="1.5" fill="#8db4e0"/><circle cx="7.2" cy="8.0" r="1.5" fill="#8db4e0"/><circle cx="7.2" cy="13.5" r="1.5" fill="#8db4e0"/></svg>
<div class="a" style="left:1910px;top:1px;width:4px;height:992px;background:#f6f7f9"></div>
<div class="a" style="left:1911px;top:3px;width:3px;height:780px;background:#7b8496;border-radius:2px"></div>
</div></body></html>
